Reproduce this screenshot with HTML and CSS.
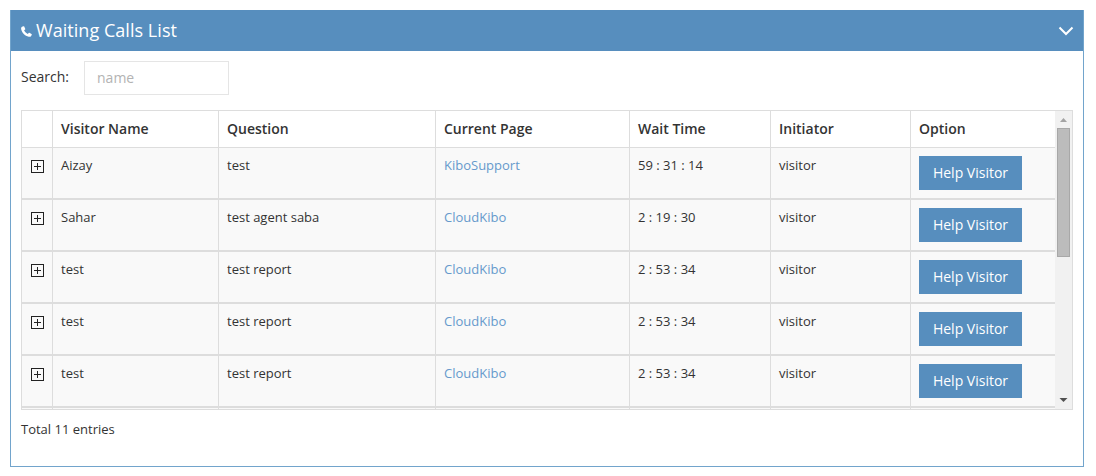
FILE: index.html
```
<!DOCTYPE html>
<html lang="en">
<head>
<meta charset="utf-8">
<title>Waiting Calls List</title>
<link rel="stylesheet" href="styles.css">
</head>
<body>
<section class="panel">
  <header class="panel-head">
    <svg class="phone" width="11" height="11" viewBox="0 0 11 11"><path d="M2.600.3 1 .8C.2 1.300 0 2.300.2 3.300.9 6.900 4 10.100 7.700 10.800c1 .2 2-.1 2.500-.8l.6-1.500c.1-.3 0-.5-.3-.6L8.400 6.800c-.3-.1-.5-.1-.7.1l-.9 1C5.300 7.200 3.900 5.900 3.100 4.300l1-.8c.2-.2.3-.4.2-.6L3.200.6C3.100.3 2.900.2 2.600.3Z" fill="#fff"/></svg>
    <h1 class="title">Waiting Calls List</h1>
    <svg class="chevron" width="16" height="10" viewBox="0 0 16 10"><path d="M1.500 1.500 8 8l6.500-6.500" fill="none" stroke="#fff" stroke-width="2"/></svg>
  </header>
  <div class="panel-body">
    <label class="search"><span class="caption">Search:</span> <input class="field" type="text" placeholder="name"></label>
    <div class="scroller">
      <div class="table">
        <div class="row head"><div></div><div>Visitor Name</div><div>Question</div><div>Current Page</div><div>Wait Time</div><div>Initiator</div><div>Option</div></div>
        <div class="row"><div><i class="plus"></i></div><div>Aizay</div><div>test</div><div><a class="link">KiboSupport</a></div><div>59 : 31 : 14</div><div>visitor</div><div><button class="btn">Help Visitor</button></div></div>
        <div class="row"><div><i class="plus"></i></div><div>Sahar</div><div>test agent saba</div><div><a class="link">CloudKibo</a></div><div>2 : 19 : 30</div><div>visitor</div><div><button class="btn">Help Visitor</button></div></div>
        <div class="row"><div><i class="plus"></i></div><div>test</div><div>test report</div><div><a class="link">CloudKibo</a></div><div>2 : 53 : 34</div><div>visitor</div><div><button class="btn">Help Visitor</button></div></div>
        <div class="row"><div><i class="plus"></i></div><div>test</div><div>test report</div><div><a class="link">CloudKibo</a></div><div>2 : 53 : 34</div><div>visitor</div><div><button class="btn">Help Visitor</button></div></div>
        <div class="row"><div><i class="plus"></i></div><div>test</div><div>test report</div><div><a class="link">CloudKibo</a></div><div>2 : 53 : 34</div><div>visitor</div><div><button class="btn">Help Visitor</button></div></div>
        <div class="row"><div></div><div></div><div></div><div></div><div></div><div></div><div></div></div>
      </div>
      <div class="bar">
        <svg class="arrow" width="17" height="17" viewBox="0 0 17 17"><path d="M5 11h7L8.500 7Z" fill="#a3a3a3"/></svg>
        <div class="thumb"></div>
        <svg class="arrow down" width="17" height="17" viewBox="0 0 17 17"><path d="M4.500 6h8L8.500 10Z" fill="#505050"/></svg>
      </div>
    </div>
    <p class="total">Total 11 entries</p>
  </div>
</section>
</body>
</html>
```

FILE: styles.css
```
* { box-sizing: border-box; }
body {
  margin: 0;
  padding: 10px;
  background: #fff;
  color: #333;
  font: 13px/20px "Open Sans", sans-serif;
}
.panel {
  width: 1074px;
  height: 457px;
  border: 1px solid #72a4cc;
  border-top: 0;
}
.panel-head {
  display: flex;
  align-items: center;
  height: 41px;
  padding: 0 9px 0 10px;
  background: #578ebe;
  color: #fff;
}
.phone { margin: 1px 4px 0 0; }
.title {
  margin: 0;
  padding-bottom: 2px;
  font-size: 18px;
  font-weight: 400;
  line-height: 24px;
  letter-spacing: 0.04px;
}
.chevron { margin-left: auto; }
.panel-body { padding: 10px; }
.search {
  display: flex;
  align-items: center;
  gap: 15px;
  height: 34px;
  font-size: 14px;
}
.caption { padding-bottom: 2px; }
.field {
  width: 145px;
  height: 34px;
  padding: 5px 12px 7px;
  border: 1px solid #e5e5e5;
  font: 14px/20px "Open Sans", sans-serif;
}
.field::placeholder { color: #b3b3b3; }
.scroller {
  display: flex;
  height: 300px;
  margin-top: 15px;
  border: 1px solid #ddd;
  overflow: hidden;
}
.table { width: 1033px; }
.row {
  display: grid;
  grid-template-columns: 31px 166px 217px 194px 141px 140px 144px;
  height: 52px;
  border-bottom: 2px solid #ddd;
  background: #f9f9f9;
  line-height: 18px;
}
.row > div {
  padding: 8px;
  border-right: 1px solid #ddd;
}
.row > div:last-child { border-right: 0; }
.head {
  height: 37px;
  border-bottom-width: 1px;
  background: #fff;
  font-size: 14px;
  font-weight: 600;
  line-height: 20px;
}
.plus {
  display: block;
  width: 13px;
  height: 13px;
  margin: 4px 0 0 1px;
  border: 1px solid #222;
  background:
    linear-gradient(#222, #222) center / 7px 1px no-repeat,
    linear-gradient(#222, #222) center / 1px 7px no-repeat;
}
.link { color: #6699cc; }
.btn {
  display: block;
  width: 103px;
  height: 34px;
  padding: 0;
  border: 0;
  background: #578ebe;
  color: #fff;
  font: 14px/20px "Open Sans", sans-serif;
}
.bar {
  display: flex;
  flex-direction: column;
  width: 17px;
  background: #f1f1f1;
}
.thumb {
  width: 13px;
  height: 129px;
  margin-left: 2px;
  border: 1px solid #a8a8a8;
  background: #bcbcbc;
}
.down { margin-top: auto; }
.total { margin: 9px 0 0; }
```
